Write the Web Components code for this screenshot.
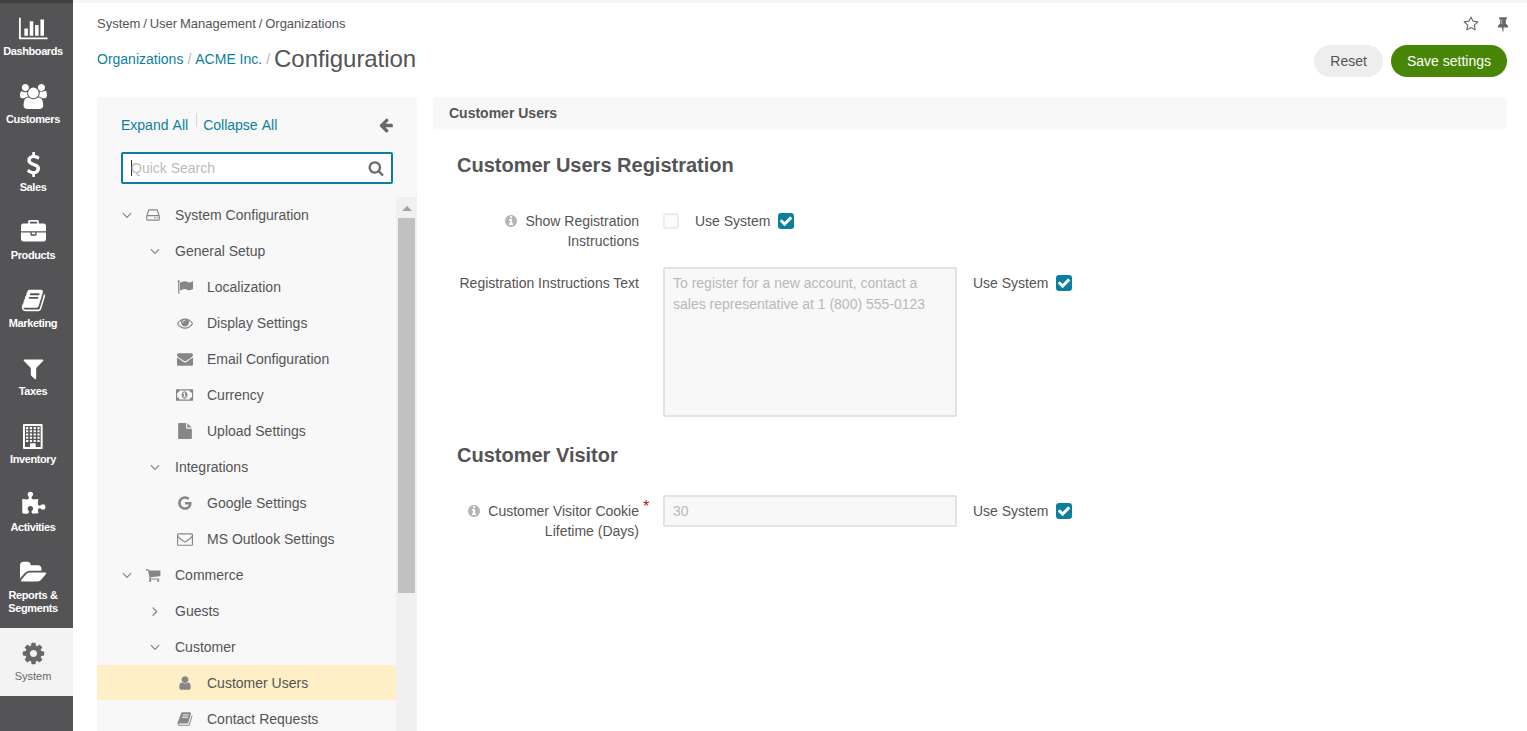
<!DOCTYPE html>
<html lang="en">
<head>
<meta charset="utf-8">
<title>Configuration</title>
<style>
html,body{margin:0;height:100%;overflow:hidden}
body{font:14px/20px "Liberation Sans",Arial,sans-serif;color:#545456;background:#fff}
</style>
</head>
<body>
<config-app></config-app>
<script>
const icons = {
  chart:[2048,'M640 896v512h-256v-512h256zm384-512v1024h-256v-1024h256zm1024 1152v128h-2048v-1536h128v1408h1920zm-640-896v768h-256v-768h256zm384-384v1152h-256v-1152h256z'],
  users:[1920,'M593 896q-162 5-265 128h-134q-82 0-138-40.5t-56-118.5q0-353 124-353 6 0 43.5 21t97.5 42.5 119 21.5q67 0 133-23-5 37-5 66 0 159 93 293zm1071 637q0 120-73 189.5t-194 69.5h-874q-121 0-194-69.5t-73-189.5q0-53 3.5-103.5t14-109 26.5-108.5 43-97.5 62-81 85.5-53.5 111.5-20q10 0 43 21.5t73 48 107 48 135 21.5 135-21.5 107-48 73-48 43-21.5q61 0 111.5 20t85.5 53.5 62 81 43 97.5 26.5 108.5 14 109 3.5 103.5zm-1024-1277q0 106-75 181t-181 75-181-75-75-181 75-181 181-75 181 75 75 181zm704 384q0 159-112.5 271.5t-271.5 112.5-271.5-112.5-112.5-271.5 112.5-271.5 271.5-112.5 271.5 112.5 112.5 271.5zm576 225q0 78-56 118.5t-138 40.5h-134q-103-123-265-128 93-134 93-293 0-29-5-66 66 23 133 23 59 0 119-21.5t97.5-42.5 43.5-21q124 0 124 353zm-128-609q0 106-75 181t-181 75-181-75-75-181 75-181 181-75 181 75 75 181z'],
  dollar:[1792,'M1362 1185q0 153-99.5 263.5t-258.5 136.5v175q0 14-9 23t-23 9h-135q-13 0-22.5-9.5t-9.5-22.5v-175q-66-9-127.5-31t-101.5-44.5-74-48-46.5-37.5-17.5-18q-17-21-2-41l103-135q7-10 23-12 15-2 24 9l2 2q113 99 243 125 37 8 74 8 81 0 142.5-43t61.5-122q0-28-15-53t-33.5-42-58.5-37.5-66-32-80-32.5q-39-16-61.5-25t-61.5-26.5-62.5-31-56.5-35.5-53.5-42.5-43.5-49-35.5-58-21-66.5-8.5-78q0-138 98-242t255-134v-180q0-13 9.5-22.5t22.5-9.5h135q14 0 23 9t9 23v176q57 6 110.5 23t87 33.5 63.5 37.5 39 29 15 14q17 18 5 38l-81 146q-8 15-23 16-14 3-27-7-3-3-14.5-12t-39-26.5-58.5-32-74.5-26-85.5-11.5q-95 0-155 43t-60 111q0 26 8.5 48t29.5 41.5 39.5 33 56 31 60.5 27 70 27.5q53 20 81 31.5t76 35 75.5 42.5 62 50 53 63.5 31.5 76.5 13 94z'],
  briefcase:[1792,'M640 256h512v-128h-512v128zm1152 640v480q0 66-47 113t-113 47h-1472q-66 0-113-47t-47-113v-480h672v160q0 26 19 45t45 19h320q26 0 45-19t19-45v-160h672zm-768 0v128h-256v-128h256zm768-480v384h-1792v-384q0-66 47-113t113-47h352v-160q0-40 28-68t68-28h576q40 0 68 28t28 68v160h352q66 0 113 47t47 113z'],
  book:[1792,'M1703 478q40 57 18 129l-275 906q-19 64-76.5 107.5t-122.5 43.5h-923q-77 0-148.5-53.5t-99.5-131.5q-24-67-2-127 0-4 3-27t4-37q1-8-3-21.5t-3-19.5q2-11 8-21t16.5-23.5 16.5-23.5q23-38 45-91.5t30-91.5q3-10 .5-30t-.5-28q3-11 17-28t17-23q21-36 42-92t25-90q1-9-2.5-32t.5-28q4-13 22-30.5t22-22.5q19-26 42.5-84.5t27.5-96.5q1-8-3-25.5t-2-26.5q2-8 9-18t18-23 17-21q8-12 16.5-30.5t15-35 16-36 19.5-32 26.5-23.5 36-11.5 47.5 5.5l-1 3q38-9 51-9h761q74 0 114 56t18 130l-274 906q-36 119-71.5 153.5t-128.5 34.5h-869q-27 0-38 15-11 16-1 43 24 70 144 70h923q29 0 56-15.5t35-41.5l300-987q7-22 5-57 38 15 59 43zm-1064 2q-4 13 2 22.5t20 9.5h608q13 0 25.5-9.5t16.5-22.5l21-64q4-13-2-22.5t-20-9.5h-608q-13 0-25.5 9.5t-16.5 22.5zm-83 256q-4 13 2 22.5t20 9.5h608q13 0 25.5-9.5t16.5-22.5l21-64q4-13-2-22.5t-20-9.5h-608q-13 0-25.5 9.5t-16.5 22.5z'],
  filter:[1792,'M1595 295q17 41-14 70l-493 493v742q0 42-39 59-13 5-25 5-27 0-45-19l-256-256q-19-19-19-45v-486l-493-493q-31-29-14-70 17-39 59-39h1280q42 0 59 39z'],
  building:[1408,'M64 0H1344Q1408 0 1408 64V1728Q1408 1792 1344 1792H64Q0 1792 0 1728V64Q0 0 64 0zM140 140V1652H500V1420Q500 1388 532 1388H876Q908 1388 908 1420V1652H1268V140z'
    + [220,450,680,910].flatMap(y => [220,490,760,1030].map(x => `M${x} ${y}h160v150h-160z`)).join('') + 'M220 1140h160v150h-160zM490 1140h160v150h-160zM760 1140h160v150h-160zM1030 1140h160v150h-160z'],
  puzzle:[1792,'M1755 1083q0 81-44.5 135t-123.5 54q-41 0-77.5-17.5t-59-38-56.5-38-71-17.5q-110 0-110 124 0 39 16 115t15 115v5q-22 0-33 1-34 3-97.5 11.5t-115.5 13.5-98 5q-61 0-103-26.5t-42-83.5q0-37 17.5-71t38-56.5 38-59 17.5-77.5q0-79-54-123.5t-135-44.5q-84 0-143 45.5t-59 127.5q0 43 15 83t33.5 64.5 33.5 53 15 50.5q0 45-46 89-37 35-117 35-95 0-245-24-9-2-27.5-4t-27.5-4l-13-2q-1 0-3-1-2 0-2-1v-1024q2 1 17.5 3.5t34 5 21.5 3.5q150 24 245 24 80 0 117-35 46-44 46-89 0-22-15-50.5t-33.5-53-33.5-64.5-15-83q0-82 59-127.5t144-45.5q80 0 134 44.5t54 123.5q0 41-17.5 77.5t-38 59-38 56.5-17.5 71q0 57 42 83.5t103 26.5q64 0 180-15t163-17v2q-1 2-3.5 17.5t-5 34-3.5 21.5q-24 150-24 245 0 80 35 117 44 46 89 46 22 0 50.5-15t53-33.5 64.5-33.5 83-15q82 0 127.5 59t45.5 143z'],
  folder:[1920,'M1879 952q0 31-31 66l-336 396q-43 51-120.5 86.5t-143.5 35.5h-1088q-34 0-60.5-13t-26.5-43q0-31 31-66l336-396q43-51 120.5-86.5t143.5-35.5h1088q34 0 60.5 13t26.5 43zm-343-344v160h-832q-94 0-197 47.5t-164 119.5l-337 396-5 6q0-4-.5-12.5t-.5-12.5v-960q0-92 66-158t158-66h320q92 0 158 66t66 158v32h544q92 0 158 66t66 158z'],
  cog:[1792,'M1152 896q0-106-75-181t-181-75-181 75-75 181 75 181 181 75 181-75 75-181zm512-109v222q0 12-8 23t-20 13l-185 28q-19 54-39 91 35 50 107 138 10 12 10 25t-9 23q-27 37-99 108t-94 71q-12 0-26-9l-138-108q-44 23-91 38-16 136-29 186-7 28-36 28h-222q-14 0-24.5-8.5t-11.5-21.5l-28-184q-49-16-90-37l-141 107q-10 9-25 9-14 0-25-11-126-114-165-168-7-10-7-23 0-12 8-23 15-21 51-66.5t54-70.5q-27-50-41-99l-183-27q-13-2-21-12.5t-8-23.5v-222q0-12 8-23t19-13l186-28q14-46 39-92-40-57-107-138-10-12-10-24 0-10 9-23 26-36 98.5-107.5t94.5-71.5q13 0 26 10l138 107q44-23 91-38 16-136 29-186 7-28 36-28h222q14 0 24.5 8.5t11.5 21.5l28 184q49 16 90 37l142-107q9-9 24-9 13 0 25 10 129 119 165 170 7 8 7 22 0 12-8 23-15 21-51 66.5t-54 70.5q26 50 41 98l183 28q13 2 21 12.5t8 23.5z'],
  star:[1792,'M1201 1004l306-297-422-62-189-382-189 382-422 62 306 297-73 421 378-199 377 199zm527-357q0 22-26 48l-363 354 86 500q1 7 1 20 0 50-41 50-19 0-40-12l-449-236-449 236q-22 12-40 12-21 0-31.5-14.5t-10.5-35.5q0-6 2-20l86-500-364-354q-25-27-25-48 0-37 56-46l502-73 225-455q19-41 49-41t49 41l225 455 502 73q56 9 56 46z'],
  pin:[1792,'M800 864v-448q0-14-9-23t-23-9-23 9-9 23v448q0 14 9 23t23 9 23-9 9-23zm672 352q0 26-19 45t-45 19h-429l-51 483q-2 12-10.5 20.5t-20.5 8.5h-1q-27 0-32-27l-76-485h-404q-26 0-45-19t-19-45q0-123 78.5-221.5t177.5-98.5v-512q-52 0-90-38t-38-90 38-90 90-38h640q52 0 90 38t38 90-38 90-90 38v512q99 0 177.5 98.5t78.5 221.5z'],
  back:[1792,'M1664 896v128q0 53-32.5 90.5t-84.5 37.5h-704l293 294q38 36 38 90t-38 90l-75 76q-37 37-90 37-52 0-91-37l-651-652q-37-37-37-90 0-52 37-91l651-650q38-38 91-38 52 0 90 38l75 74q38 38 38 91t-38 91l-293 293h704q52 0 84.5 37.5t32.5 90.5z'],
  search:[1792,'M1216 832q0-185-131.5-316.5t-316.5-131.5-316.5 131.5-131.5 316.5 131.5 316.5 316.5 131.5 316.5-131.5 131.5-316.5zm512 832q0 52-38 90t-90 38q-54 0-90-38l-343-342q-179 124-399 124-143 0-273.5-55.5t-225-150-150-225-55.5-273.5 55.5-273.5 150-225 225-150 273.5-55.5 273.5 55.5 225 150 150 225 55.5 273.5q0 220-124 399l343 343q37 37 37 90z'],
  down:[1792,'M1395 736q0 13-10 23l-466 466q-10 10-23 10t-23-10l-466-466q-10-10-10-23t10-23l50-50q10-10 23-10t23 10l393 393 393-393q10-10 23-10t23 10l50 50q10 10 10 23z'],
  right:[1792,'M1171 960q0 13-10 23l-466 466q-10 10-23 10t-23-10l-50-50q-10-10-10-23t10-23l393-393-393-393q-10-10-10-23t10-23l50-50q10-10 23-10t23 10l466 466q10 10 10 23z'],
  hdd:[1792,'M1168 1216q0 33-23.5 56.5t-56.5 23.5-56.5-23.5-23.5-56.5 23.5-56.5 56.5-23.5 56.5 23.5 23.5 56.5zm256 0q0 33-23.5 56.5t-56.5 23.5-56.5-23.5-23.5-56.5 23.5-56.5 56.5-23.5 56.5 23.5 23.5 56.5zm112 160v-320q0-13-9.5-22.5t-22.5-9.5h-1216q-13 0-22.5 9.5t-9.5 22.5v320q0 13 9.5 22.5t22.5 9.5h1216q13 0 22.5-9.5t9.5-22.5zm-1230-480h1180l-157-482q-4-13-16-21.5t-26-8.5h-782q-14 0-26 8.5t-16 21.5zm1358 160v320q0 66-47 113t-113 47h-1216q-66 0-113-47t-47-113v-320q0-25 16-75l197-606q17-53 63-86t101-33h782q55 0 101 33t63 86l197 606q16 50 16 75z'],
  flag:[1792,'M320 256q0 72-64 110v1266q0 13-9.5 22.5t-22.5 9.5h-64q-13 0-22.5-9.5t-9.5-22.5v-1266q-64-38-64-110 0-53 37.5-90.5t90.5-37.5 90.5 37.5 37.5 90.5zm1472 64v763q0 25-12.5 38.5t-39.5 27.5q-215 116-369 116-61 0-123.5-22t-108.5-48-115.5-48-142.5-22q-192 0-464 146-17 9-33 9-26 0-45-19t-19-45v-742q0-32 31-55 21-14 79-43 236-120 421-120 107 0 200 29t219 88q38 19 88 19 54 0 117.5-21t110-47 88-47 54.5-21q26 0 45 19t19 45z'],
  eye:[1792,'M1664 960q-152-236-381-353 61 104 61 225 0 185-131.5 316.5t-316.5 131.5-316.5-131.5-131.5-316.5q0-121 61-225-229 117-381 353 133 205 333.5 326.5t434.5 121.5 434.5-121.5 333.5-326.5zm-720-384q0-20-14-34t-34-14q-125 0-214.5 89.5t-89.5 214.5q0 20 14 34t34 14 34-14 14-34q0-86 61-147t147-61q20 0 34-14t14-34zm848 384q0 34-20 69-140 230-376.5 368.5t-499.5 138.5-499.5-139-376.5-368q-20-35-20-69t20-69q140-229 376.5-368t499.5-139 499.5 139 376.5 368q20 35 20 69z'],
  mail:[1792,'M1792 710v794q0 66-47 113t-113 47h-1472q-66 0-113-47t-47-113v-794q44 49 101 87 362 246 497 345 57 42 92.5 65.5t94.5 48 110 24.5h2q51 0 110-24.5t94.5-48 92.5-65.5q170-123 498-345 57-39 100-87zm0-294q0 79-49 151t-122 123q-376 261-468 325-10 7-42.5 31t-54 38.5-52 32.5-57.5 27-50 9h-2q-23 0-50-9t-57.5-27-52-32.5-54-38.5-42.5-31q-91-64-262-182.5t-205-142.5q-62-42-117-115.5t-55-136.5q0-78 41.5-130t118.5-52h1472q65 0 112.5 47t47.5 113z'],
  money:[1920,'M768 1152h384v-96h-128v-448h-114l-148 137 77 80q42-37 55-57h2v288h-128v96zm512-256q0 70-21 142t-59.5 134-101.5 101-138 39-138-39-101.5-101-59.5-134-21-142 21-142 59.5-134 101.5-101 138-39 138 39 101.5 101 59.5 134 21 142zm512 256v-512q-106 0-181-75t-75-181h-1152q0 106-75 181t-181 75v512q106 0 181 75t75 181h1152q0-106 75-181t181-75zm128-832v1152q0 26-19 45t-45 19h-1792q-26 0-45-19t-19-45v-1152q0-26 19-45t45-19h1792q26 0 45 19t19 45z'],
  file:[1792,'M1152 512v-472q22 14 36 28l408 408q14 14 28 36h-472zm-128 32q0 40 28 68t68 28h544v1056q0 40-28 68t-68 28h-1344q-40 0-68-28t-28-68v-1600q0-40 28-68t68-28h800v544z'],
  google:[1792,'M896 786h725q12 67 12 128 0 217-91 387.5t-259.5 266.5-386.5 96q-157 0-299-60.5t-245-163.5-163.5-245-60.5-299 60.5-299 163.5-245 245-163.5 299-60.5q300 0 515 201l-209 201q-123-119-306-119-129 0-238.5 65t-173.5 176.5-64 243.5 64 243.5 173.5 176.5 238.5 65q87 0 160-24t120-60 82-82 51.5-87 22.5-78h-436v-264z'],
  mailo:[1792,'M1664 1504v-768q-32 36-69 66-268 206-426 338-51 43-83 67t-86.5 48.5-102.5 24.5h-2q-48 0-102.5-24.5t-86.5-48.5-83-67q-158-132-426-338-37-30-69-66v768q0 13 9.5 22.5t22.5 9.5h1472q13 0 22.5-9.5t9.5-22.5zm0-1051v-24.5l-.5-13-3-12.5-5.5-9-9-7.5-14-2.5h-1472q-13 0-22.5 9.5t-9.5 22.5q0 168 147 284 193 152 401 317 6 5 35 29.5t46 37.5 44.5 31.5 50.5 27.5 43 9h2q20 0 43-9t50.5-27.5 44.5-31.5 46-37.5 35-29.5q208-165 401-317 54-43 100.5-115.5t46.5-131.5zm128-37v1088q0 66-47 113t-113 47h-1472q-66 0-113-47t-47-113v-1088q0-66 47-113t113-47h1472q66 0 113 47t47 113z'],
  cart:[1792,'M704 1536q0 52-38 90t-90 38-90-38-38-90 38-90 90-38 90 38 38 90zm896 0q0 52-38 90t-90 38-90-38-38-90 38-90 90-38 90 38 38 90zm128-1088v512q0 24-16.5 42.5t-40.5 21.5l-1044 122q13 60 13 70 0 16-24 64h920q26 0 45 19t19 45-19 45-45 19h-1024q-26 0-45-19t-19-45q0-11 8-31.5t16-36 21.5-40 15.5-29.5l-177-823h-204q-26 0-45-19t-19-45 19-45 45-19h256q16 0 28.5 6.5t19.5 15.5 13 24.5 8 26 5.5 29.5 4.5 26h1201q26 0 45 19t19 45z'],
  user:[1792,'M1536 1399q0 109-62.5 187t-150.5 78h-854q-88 0-150.5-78t-62.5-187q0-85 8.5-160.5t31.5-152 58.5-131 94-89 134.5-34.5q131 128 313 128t313-128q76 0 134.5 34.5t94 89 58.5 131 31.5 152 8.5 160.5zm-256-887q0 159-112.5 271.5t-271.5 112.5-271.5-112.5-112.5-271.5 112.5-271.5 271.5-112.5 271.5 112.5 112.5 271.5z'],
  info:[1792,'M1152 1376v-160q0-14-9-23t-23-9h-96v-512q0-14-9-23t-23-9h-320q-14 0-23 9t-9 23v160q0 14 9 23t23 9h96v320h-96q-14 0-23 9t-9 23v160q0 14 9 23t23 9h448q14 0 23-9t9-23zm-128-896v-160q0-14-9-23t-23-9h-192q-14 0-23 9t-9 23v160q0 14 9 23t23 9h192q14 0 23-9t9-23zm640 416q0 209-103 385.5t-279.5 279.5-385.5 103-385.5-103-279.5-279.5-103-385.5 103-385.5 279.5-279.5 385.5-103 385.5 103 279.5 279.5 103 385.5z'],
  check:[1792,'M1671 566q0 40-28 68l-724 724-136 136q-28 28-68 28t-68-28l-136-136-362-362q-28-28-28-68t28-68l136-136q28-28 68-28t68 28l294 295 656-657q28-28 68-28t68 28l136 136q28 28 28 68z']
};

const define = (name, render) => customElements.define(name, class extends HTMLElement {
  constructor() { super(); this.attachShadow({ mode: 'open' }); }
  connectedCallback() { this.shadowRoot.innerHTML = render(this); }
});

define('ui-icon', el => {
  const [w, d] = icons[el.getAttribute('name')];
  const s = +(el.getAttribute('size') || 16);
  return `<style>:host{display:block;flex:none;white-space:normal}svg{display:block;fill:currentColor;overflow:visible}</style>
    <svg width="${(w / 1792 * s).toFixed(2)}" height="${s}" viewBox="0 0 ${w} 1792" fill-rule="${el.getAttribute('name') === 'building' ? 'evenodd' : 'nonzero'}"><path d="${d}"/></svg>`;
});

define('nav-item', el => `<style>
  :host{display:flex;flex-direction:column;align-items:center;box-sizing:border-box;min-height:68px;padding:13px 7px 13px 0;color:#fff;font-weight:700;font-size:11px;line-height:13px;text-align:center;letter-spacing:-.4px}
  :host([active]){background:#f3f3f3;color:#686868;font-weight:400;letter-spacing:0}
  span{margin-top:4px;white-space:pre}
  </style><ui-icon name="${el.getAttribute('icon')}" size="25"></ui-icon><span><slot></slot></span>`);

define('side-nav', () => `<style>
  :host{display:block;width:73px;box-sizing:border-box;background:#545456;border-top:3px solid #404041}</style>
  <nav-item icon="chart">Dashboards</nav-item><nav-item icon="users">Customers</nav-item>
  <nav-item icon="dollar">Sales</nav-item><nav-item icon="briefcase">Products</nav-item>
  <nav-item icon="book">Marketing</nav-item><nav-item icon="filter">Taxes</nav-item>
  <nav-item icon="building">Inventory</nav-item><nav-item icon="puzzle">Activities</nav-item>
  <nav-item icon="folder">Reports &amp;
Segments</nav-item><nav-item icon="cog" active>System</nav-item>`);

define('pill-button', () => `<style>
  :host{display:block;box-sizing:border-box;height:32px;padding:6px 16px;border-radius:16px;background:#eee;line-height:20px;white-space:nowrap}
  :host([primary]){background:#488607;color:#fff}</style><slot></slot>`);

define('page-header', () => `<style>
  :host{display:flex;justify-content:space-between;height:94px;box-sizing:border-box;padding:10px 20px 0 24px;white-space:nowrap}
  .path{font-size:13px;line-height:20px;word-spacing:-.75px;padding-top:1px}
  .title{display:flex;align-items:center;margin-top:9px;line-height:32px}
  .title a{color:#0c7f9f}.title i{font-style:normal;color:#b5b5b5;margin:0 4px}
  h1{font-size:24px;font-weight:400;line-height:32px;margin:0;letter-spacing:-.06px}
  .tools{display:flex;justify-content:flex-end;gap:16px;margin:3px -4px 0 0;color:#686868}
  .buttons{display:flex;gap:8px;margin-top:13px}
  </style>
  <div><div class="path">System / User Management / Organizations</div>
  <div class="title"><a>Organizations</a><i>/</i><a>ACME Inc.</a><i>/</i><h1>Configuration</h1></div></div>
  <div><div class="tools"><ui-icon name="star"></ui-icon><ui-icon name="pin"></ui-icon></div>
  <div class="buttons"><pill-button>Reset</pill-button><pill-button primary>Save settings</pill-button></div></div>`);

define('tree-row', el => {
  const level = +el.getAttribute('level'), icon = el.getAttribute('icon');
  const arrow = level < 3 ? `<div class="arrow"><ui-icon name="${el.hasAttribute('closed') ? 'right' : 'down'}"></ui-icon></div>` : '';
  return `<style>
  :host{display:flex;align-items:center;height:35px;margin-bottom:1px;white-space:nowrap}
  :host([active]){background:#ffefc6}
  :host([level="1"]){padding-left:22px}:host([level="2"]){padding-left:50px}:host([level="3"]){padding-left:75px}
  ui-icon{color:#868688}.arrow{width:16px;margin-top:1px}
  .icon{width:26px;display:flex;justify-content:center;margin:1px 8px 0 0}
  :host([level="1"]) .icon{margin-left:5px;margin-right:9px}
  :host([level="2"]) .text{margin-left:12px}
  .text{line-height:20px;margin-top:1px}
  :host([level="3"]) .text{margin-left:1px}
  </style>${arrow}${icon ? `<div class="icon"><ui-icon name="${icon}"></ui-icon></div>` : ''}<div class="text"><slot></slot></div>`;
});

define('scroll-bar', () => `<style>
  :host{display:flex;flex-direction:column;align-items:center;width:21px;background:#f0f0f0}
  b{width:0;border:5px solid transparent;border-top:0;border-bottom:5px solid #a0a0a0;margin:9px 0 7px}
  i{width:17px;height:375px;background:#c1c1c1}</style><b></b><i></i>`);

define('tree-panel', () => `<style>
  :host{display:flex;flex-direction:column;width:320px;background:#f8f8f8;border-radius:4px 4px 0 0;overflow:hidden}
  .top{display:flex;height:20px;margin:18px 24px 0;color:#0c7f9f;word-spacing:1px}
  .top ui-icon{margin:2px -1px 0 auto;color:#686868}
  .sep{width:1px;height:14px;background:#d8d8d8;margin:-2px 6px 0 8px}
  .search{display:flex;align-items:center;height:32px;box-sizing:border-box;border:2px solid #0c7f9f;border-radius:2px;background:#fff;color:#bababa;margin:17px 24px 13px;padding:0 7px 0 8px}
  .caret{width:1px;height:16px;background:#333;margin-right:-1px}
  .search ui-icon{margin-left:auto;color:#686868}
  .body{display:flex;flex:1;min-height:0}.list{flex:1;min-width:0}
  </style>
  <div class="top"><span>Expand All</span><span class="sep"></span><span>Collapse All</span><ui-icon name="back"></ui-icon></div>
  <div class="search"><span class="caret"></span><span>Quick Search</span><ui-icon name="search"></ui-icon></div>
  <div class="body"><div class="list">
  <tree-row level="1" icon="hdd">System Configuration</tree-row>
  <tree-row level="2">General Setup</tree-row>
  <tree-row level="3" icon="flag">Localization</tree-row>
  <tree-row level="3" icon="eye">Display Settings</tree-row>
  <tree-row level="3" icon="mail">Email Configuration</tree-row>
  <tree-row level="3" icon="money">Currency</tree-row>
  <tree-row level="3" icon="file">Upload Settings</tree-row>
  <tree-row level="2">Integrations</tree-row>
  <tree-row level="3" icon="google">Google Settings</tree-row>
  <tree-row level="3" icon="mailo">MS Outlook Settings</tree-row>
  <tree-row level="1" icon="cart">Commerce</tree-row>
  <tree-row level="2" closed>Guests</tree-row>
  <tree-row level="2">Customer</tree-row>
  <tree-row level="3" icon="user" active>Customer Users</tree-row>
  <tree-row level="3" icon="book">Contact Requests</tree-row>
  </div><scroll-bar></scroll-bar></div>`);

define('check-box', el => `<style>
  :host{display:flex;align-items:center;justify-content:center;width:16px;height:16px;box-sizing:border-box;border-radius:3px;border:2px solid #ececec;background:#fbfbfb;color:#fff}
  :host([checked]){background:#0c7f9f;border:0}</style>${el.hasAttribute('checked') ? '<ui-icon name="check" size="14"></ui-icon>' : ''}`);

define('text-field', () => `<style>
  :host{display:block;box-sizing:border-box;width:294px;height:32px;padding:4px 8px;border:2px solid #e2e2e2;border-radius:2px;background:#f8f8f8;color:#b9b9b9;line-height:21px;white-space:pre}
  :host([multiline]){height:150px}</style><slot></slot>`);

define('form-row', el => `<style>
  :host{display:flex;align-items:flex-start}
  .label{position:relative;display:flex;justify-content:flex-end;width:182px;margin:var(--offset,6px) 24px 0 0;text-align:right;white-space:pre}
  .label ui-icon{margin:3px 7px 0 0;color:#b5b5b5}
  .req{position:absolute;left:186px;top:-4px;color:#a81b1b;font-size:16px}
  .system{display:flex;gap:8px;margin:var(--offset,6px) 0 0 16px}
  check-box{margin-top:2px}
  </style><div class="label">${el.hasAttribute('info') ? '<ui-icon name="info" size="14"></ui-icon>' : ''}<slot name="label"></slot>${el.hasAttribute('required') ? '<span class="req">*</span>' : ''}</div>
  <slot></slot><div class="system"><span>Use System</span><check-box checked></check-box></div>`);

define('config-panel', () => `<style>
  :host{display:block;flex:1;margin-right:20px}
  .bar{height:32px;line-height:32px;padding-left:16px;background:#f8f8f8;border-radius:4px;font-weight:700}
  h2{font-size:20px;line-height:24px;margin:24px 0 0 24px}
  form-row{margin-left:24px}
  .one{margin-top:34px;--offset:0px}.two{margin-top:16px}.three{margin-top:28px}
  .one check-box{margin-top:2px}
  .second{margin-top:26px}
  </style>
  <div class="bar">Customer Users</div>
  <h2>Customer Users Registration</h2>
  <form-row class="one" info><span slot="label">Show Registration
Instructions</span><check-box></check-box></form-row>
  <form-row class="two"><span slot="label">Registration Instructions Text</span><text-field multiline>To register for a new account, contact a
sales representative at 1 (800) 555-0123</text-field></form-row>
  <h2 class="second">Customer Visitor</h2>
  <form-row class="three" info required><span slot="label">Customer Visitor Cookie
Lifetime (Days)</span><text-field>30</text-field></form-row>`);

define('config-app', () => `<style>
  :host{display:flex;height:731px}
  main{flex:1;display:flex;flex-direction:column;border-top:3px solid #f7f7f7;min-width:0}
  .cols{flex:1;display:flex;gap:16px;padding-left:24px;min-height:0}
  </style><side-nav></side-nav><main><page-header></page-header><div class="cols"><tree-panel></tree-panel><config-panel></config-panel></div></main>`);
</script>
</body>
</html>
